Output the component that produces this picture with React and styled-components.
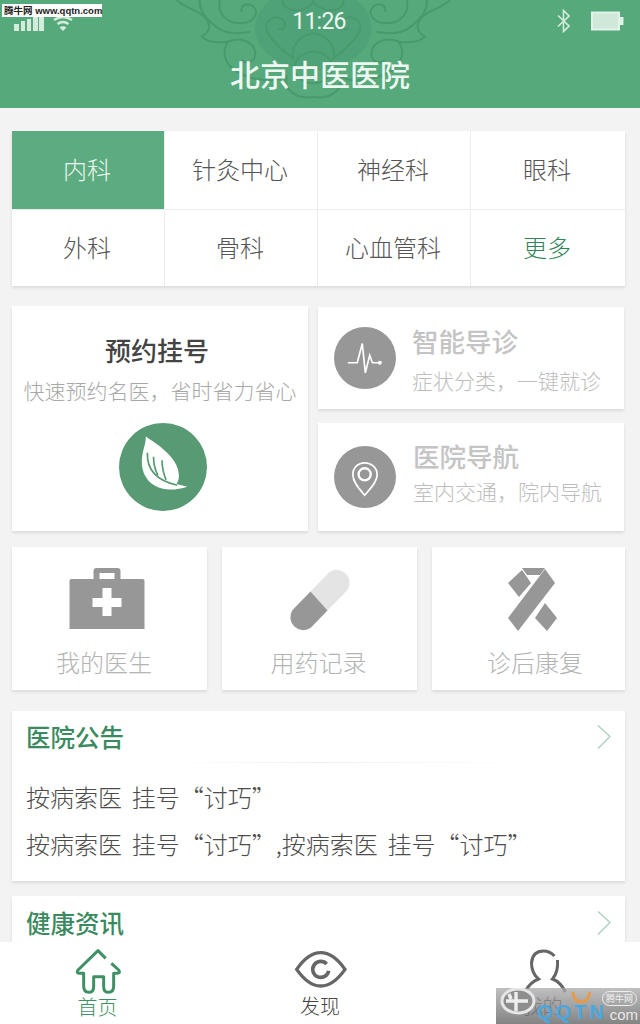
import styled, { createGlobalStyle } from "styled-components";

const GlobalStyle = createGlobalStyle`
  html, body {
    margin: 0;
    padding: 0;
    background: #f3f3f3;
    font-family: "Noto Sans CJK SC", "Noto Sans", sans-serif;
  }
  * { box-sizing: border-box; }
`;

const Page = styled.div`
  position: relative;
  width: 640px;
  height: 1024px;
  display: flex;
  flex-direction: column;
  overflow: hidden;
  background: #f3f3f3;
`;

const Header = styled.header`
  position: relative;
  flex: none;
  height: 108px;
  background: #55a97b;
  color: #eef7f1;
  overflow: hidden;
`;

const Pattern = styled.svg`
  position: absolute;
  left: 150px;
  top: 0;
  width: 330px;
  height: 108px;
`;

const StatusBar = styled.div`
  position: relative;
  height: 42px;
  padding: 0 16px 0 14px;
  display: flex;
  align-items: center;
  justify-content: space-between;
`;

const Clock = styled.span`
  position: absolute;
  left: 240px;
  width: 158px;
  top: 7px;
  text-align: center;
  font-family: Roboto, sans-serif;
  font-size: 23px;
  letter-spacing: -0.8px;
  line-height: 30px;
`;

const StatusGroup = styled.div`
  display: flex;
  align-items: center;
  gap: ${(p) => p.$gap}px;
  margin-top: ${(p) => p.$top || 0}px;
`;

const Title = styled.h1`
  position: relative;
  margin: 0;
  text-align: center;
  font-size: 30px;
  line-height: 40px;
  font-weight: 500;
  padding-top: 11px;
`;

const Main = styled.main`
  flex: 1;
  min-height: 0;
  overflow: hidden;
  padding: 23px 15px 0 12px;
  display: flex;
  flex-direction: column;
  & > * {
    flex: none;
  }
`;

const DeptGrid = styled.div`
  display: grid;
  grid-template-columns: 153px 153px 153px 1fr;
  grid-template-rows: 79px 76px;
  background: #fff;
  box-shadow: 0 2px 3px rgba(0, 0, 0, 0.1);
`;

const Dept = styled.div`
  display: flex;
  align-items: center;
  justify-content: center;
  padding: 0 2px 3px 0;
  font-size: 24px;
  font-weight: 300;
  color: ${(p) => (p.$active ? "#eef7f1" : p.$more ? "#2f8458" : "#555")};
  background: ${(p) => (p.$active ? "#5dab80" : "transparent")};
  border-right: ${(p) => (p.$last ? "none" : "1px solid #ececec")};
  border-bottom: ${(p) => (p.$bottom ? "none" : "1px solid #ececec")};
`;

const Services = styled.div`
  margin-top: 20px;
  display: grid;
  grid-template-columns: 296px 306px;
  column-gap: 10px;
  height: 225px;
`;

const Card = styled.div`
  background: #fff;
  box-shadow: 0 2px 3px rgba(0, 0, 0, 0.1);
`;

const BookCard = styled(Card)`
  display: flex;
  flex-direction: column;
  align-items: center;
  padding-top: 25px;
`;

const BookTitle = styled.div`
  font-size: 26px;
  line-height: 38px;
  color: #444;
  font-weight: 500;
  margin-right: 6px;
`;

const BookSub = styled.div`
  font-size: 21px;
  font-weight: 300;
  line-height: 30px;
  color: #a8a8a8;
  margin-top: 6px;
`;

const LeafBadge = styled.svg`
  display: block;
  width: 88px;
  height: 88px;
  margin-top: 18px;
  margin-left: 5px;
`;

const SideStack = styled.div`
  display: grid;
  grid-template-rows: 102px 108px;
  row-gap: 14px;
  padding-top: 1px;
`;

const SideCard = styled(Card)`
  display: flex;
  align-items: center;
  gap: 16px;
  padding-left: 16px;
`;

const RoundIcon = styled.svg`
  flex: none;
  display: block;
  width: 62px;
  height: 62px;
`;

const SideText = styled.div`
  padding-bottom: ${(p) => p.$lift}px;
  margin-left: ${(p) => p.$nudge}px;
`;

const SideTitle = styled.div`
  font-size: 26.5px;
  line-height: 38px;
  color: #c4c4c4;
  font-weight: 500;
`;

const SideSub = styled.div`
  font-size: 21px;
  font-weight: 300;
  line-height: 30px;
  color: #bdbdbd;
  margin-top: ${(p) => p.$gap}px;
`;

const Tools = styled.div`
  margin-top: 16px;
  display: grid;
  grid-template-columns: 195px 195px 193px;
  column-gap: 15px;
`;

const ToolCard = styled(Card)`
  height: 143px;
  display: flex;
  flex-direction: column;
  align-items: center;
  padding: 19px ${(p) => p.$right || 0}px 0 ${(p) => p.$left || 0}px;
`;

const ToolIcon = styled.svg`
  display: block;
  height: 68px;
  width: 80px;
`;

const ToolLabel = styled.div`
  margin: 11px ${(p) => p.$right || 0}px 0 ${(p) => p.$left || 0}px;
  font-size: 24px;
  font-weight: 300;
  line-height: 34px;
  color: #b4b4b4;
`;

const Notice = styled(Card)`
  margin-top: 21px;
  height: 170px;
  padding: 0 14px;
`;

const SectionHead = styled.div`
  height: 51px;
  display: flex;
  align-items: center;
  justify-content: space-between;
`;

const SectionTitle = styled.h2`
  margin: 0;
  font-size: 24.5px;
  font-weight: 500;
  color: #3b8a5f;
`;

const Fade = styled.div`
  height: 1px;
  background: linear-gradient(90deg, transparent 25%, #efefef 50%, transparent 85%);
`;

const NoticeLines = styled.div`
  padding-top: 16px;
  display: flex;
  flex-direction: column;
  gap: 12px;
`;

const NoticeLine = styled.div`
  font-size: 24px;
  font-weight: 300;
  line-height: 35px;
  word-spacing: 4.5px;
  color: #4c4c4c;
  white-space: nowrap;
`;

const Health = styled(Card)`
  margin-top: 15px;
  padding: 1px 14px 0;
`;

const TabBar = styled.nav`
  flex: none;
  height: 82px;
  background: #fff;
  display: grid;
  grid-template-columns: 195px 1fr 195px;
`;

const Tab = styled.div`
  display: flex;
  flex-direction: column;
  align-items: center;
  padding-top: 7px;
  font-size: 20px;
  font-weight: 300;
  line-height: 28px;
  color: ${(p) => p.$color};
`;

const TabIcon = styled.svg`
  display: block;
  width: 56px;
  height: 46px;
  margin-bottom: ${(p) => p.$pull}px;
`;

const TopMark = styled.div`
  position: absolute;
  left: 2px;
  top: 4px;
  width: 100px;
  height: 13px;
  background: #fff;
  color: #222;
  font-family: "Liberation Sans", "Noto Sans CJK SC", sans-serif;
  font-size: 9.5px;
  font-weight: 700;
  line-height: 13px;
  white-space: nowrap;
  padding-left: 2px;
`;

const CornerMark = styled.div`
  position: absolute;
  right: 0;
  bottom: 0;
  width: 144px;
  height: 36px;
  background: linear-gradient(180deg, rgba(170, 170, 170, 0.75), rgba(110, 110, 110, 0.85));
  overflow: hidden;
`;

const CornerLogo = styled.svg`
  position: absolute;
  left: 2px;
  top: 0;
  width: 94px;
  height: 36px;
`;

const CornerText = styled.span`
  position: absolute;
  left: 41px;
  bottom: 0;
  font-family: "Liberation Sans", sans-serif;
  font-size: 20px;
  letter-spacing: 3px;
  line-height: 24px;
  font-weight: 700;
  color: #4aa8e0;
`;

const CornerCom = styled.span`
  position: absolute;
  right: 2px;
  bottom: 1px;
  font-family: "Liberation Sans", sans-serif;
  font-size: 15px;
  line-height: 16px;
  color: #e8e8e8;
`;

const CornerTag = styled.span`
  position: absolute;
  right: 3px;
  top: 3px;
  width: 35px;
  height: 15px;
  border: 1px solid #eee;
  border-radius: 8px;
  font-size: 9px;
  line-height: 13px;
  text-align: center;
  color: #eee;
`;

const Chevron = () => (
  <svg width="14" height="26" viewBox="0 0 14 26" fill="none">
    <path d="M1 1.5 L13 12.5 L1 24.5" stroke="#a9d1bd" strokeWidth="1.4" />
  </svg>
);

const depts = [
  ["内科", "针灸中心", "神经科", "眼科"],
  ["外科", "骨科", "心血管科", "更多"],
];

// left half of the ornament, mirrored about x=490
const Scrolls = () => (
  <g>
    <path d="M490 290 C440 300 400 270 410 230 C370 250 300 240 260 215 C220 190 215 150 235 125 C200 130 170 125 155 110 C190 90 180 60 150 40 C120 25 95 15 80 0" />
    <path d="M235 125 C270 110 310 125 315 155 C320 185 290 195 275 180" />
    <path d="M210 0 C200 40 230 70 270 70 C310 70 330 40 310 20 C295 5 270 15 275 35" />
    <path d="M490 100 C450 105 420 140 430 175 C395 150 365 125 350 90 C340 60 380 40 400 60 C415 78 395 95 385 85" />
    <path d="M400 0 C395 20 420 35 450 30 C475 25 490 10 490 0" />
    <path d="M490 155 C450 155 420 190 440 225 C455 250 490 250 490 250" />
    <path d="M150 0 C145 30 170 60 205 85 C235 105 270 100 300 95" />
  </g>
);

const App = () => {
  return (
    <Page>
      <GlobalStyle />
      <Header>
        <Pattern viewBox="0 0 990 324" fill="none">
          <ellipse cx="490" cy="85" rx="175" ry="125" fill="#4fa277" />
          <g stroke="#489a6e" strokeWidth="6">
            <Scrolls />
            <g transform="translate(980 0) scale(-1 1)">
              <Scrolls />
            </g>
          </g>
        </Pattern>
        <StatusBar>
          <StatusGroup $gap={9} $top={5}>
            <svg width="30" height="14" viewBox="0 0 30 14">
              <rect x="0" y="7" width="5" height="7" fill="#d5ecdd" />
              <rect x="7" y="4" width="4" height="10" fill="#d5ecdd" />
              <rect x="13" y="2" width="4" height="12" fill="#d5ecdd" />
              <rect x="19" y="0" width="5" height="14" fill="#d5ecdd" />
              <rect x="25" y="0" width="5" height="14" fill="#d5ecdd" />
            </svg>
            <svg width="20" height="14" viewBox="0 0 20 14" fill="none" stroke="#d5ecdd" strokeWidth="2.4">
              <path d="M1 3 Q10 -3 19 3" />
              <path d="M4.5 7 Q10 3 15.5 7" />
              <path d="M10 14 L6.5 10.5 Q10 8 13.5 10.5 Z" fill="#d5ecdd" stroke="none" />
            </svg>
          </StatusGroup>
          <Clock>11:26</Clock>
          <StatusGroup $gap={21}>
            <svg width="13" height="24" viewBox="0 0 13 24" fill="none" stroke="#d5ecdd" strokeWidth="1.6">
              <path d="M1 6.5 L12 17 L6.5 22.5 L6.5 1.5 L12 7 L1 17.5" />
            </svg>
            <svg width="33" height="20" viewBox="0 0 33 20">
              <rect x="1" y="1.5" width="27" height="17" fill="#cfe8d9" stroke="#e2f2e9" strokeWidth="2" />
              <rect x="29" y="6" width="3.5" height="8" fill="#e2f2e9" />
            </svg>
          </StatusGroup>
        </StatusBar>
        <Title>北京中医医院</Title>
      </Header>

      <Main>
        <DeptGrid>
          {depts.map((row, r) =>
            row.map((name, c) => (
              <Dept
                key={name}
                $active={name === "内科"}
                $more={name === "更多"}
                $last={c === 3}
                $bottom={r === 1}
              >
                {name}
              </Dept>
            ))
          )}
        </DeptGrid>

        <Services>
          <BookCard>
            <BookTitle>预约挂号</BookTitle>
            <BookSub>快速预约名医，省时省力省心</BookSub>
            <LeafBadge viewBox="13 10 260 260">
              <circle cx="143" cy="140" r="130" fill="#579a73" />
              <path
                d="M92 50 C130 75 190 115 190 165 C190 175 188 183 183 190 L215 198 C185 208 145 212 118 195 C90 178 75 145 82 105 C85 85 93 70 92 50 Z"
                fill="#fff"
              />
              <g fill="none" stroke="#579a73" strokeWidth="5">
                <path d="M97 98 C95 140 115 178 185 194" />
                <path d="M115 110 C115 130 120 150 128 165" />
                <path d="M140 120 C140 140 145 160 152 178" />
              </g>
            </LeafBadge>
          </BookCard>

          <SideStack>
            <SideCard>
              <RoundIcon viewBox="44 86 184 184">
                <circle cx="136" cy="178" r="92" fill="#979797" />
                <path d="M85 192 H113 L128 135 L137 222 L150 170 L158 192 H180" fill="none" stroke="#fff" strokeWidth="5" />
                <circle cx="180" cy="192" r="6" fill="#fff" />
              </RoundIcon>
              <SideText $lift={0} $nudge={0}>
                <SideTitle>智能导诊</SideTitle>
                <SideSub $gap={5}>症状分类，一键就诊</SideSub>
              </SideText>
            </SideCard>
            <SideCard>
              <RoundIcon viewBox="44 432 184 184">
                <circle cx="136" cy="524" r="92" fill="#979797" />
                <path
                  d="M135 578 C120 560 100 540 100 517 C100 497 115 482 135 482 C155 482 172 497 172 517 C172 540 150 560 135 578 Z"
                  fill="none"
                  stroke="#fff"
                  strokeWidth="5"
                />
                <circle cx="135" cy="516" r="18" fill="none" stroke="#fff" strokeWidth="7" />
              </RoundIcon>
              <SideText $lift={12} $nudge={1}>
                <SideTitle>医院导航</SideTitle>
                <SideSub $gap={1}>室内交通，院内导航</SideSub>
              </SideText>
            </SideCard>
          </SideStack>
        </Services>

        <Tools>
          <ToolCard $right={6}>
            <ToolIcon viewBox="66.5 566 80 68">
              <path d="M93 579 V571 Q93 568 96 568 H117 Q120 568 120 571 V579 H114 V573 H99 V579 Z" fill="#979797" />
              <path d="M69 581 Q69 579 71 579 H142 Q144 579 144 581 V629 H69 Z" fill="#979797" />
              <path d="M102 588 H111 V598 H121 V607 H111 V616 H102 V607 H92 V598 H102 Z" fill="#fff" />
            </ToolIcon>
            <ToolLabel $right={5}>我的医生</ToolLabel>
          </ToolCard>
          <ToolCard>
            <ToolIcon viewBox="279.5 566 80 68">
              <path d="M310 591.5 L329 572 A13 13 0 0 1 347 590 L327 610.5 Z" fill="#e4e4e4" />
              <path d="M310 591.5 L327 610.5 L310 628 A13 13 0 0 1 292 610 Z" fill="#979797" />
            </ToolIcon>
            <ToolLabel $right={2}>用药记录</ToolLabel>
          </ToolCard>
          <ToolCard $left={9}>
            <ToolIcon viewBox="493 566 80 68">
              <path d="M522 568 H545 L540 575 H527 Z" fill="#979797" />
              <path d="M545 569 L555 583 L518 631 L508 618 Z" fill="#979797" />
              <path d="M522 570 L531 583 L519 597 L508 583 Z" fill="#979797" />
              <path d="M545 603 L557 618 L547 631 L535 618 Z" fill="#979797" />
            </ToolIcon>
            <ToolLabel $left={4}>诊后康复</ToolLabel>
          </ToolCard>
        </Tools>

        <Notice>
          <SectionHead>
            <SectionTitle>医院公告</SectionTitle>
            <Chevron />
          </SectionHead>
          <Fade />
          <NoticeLines>
            <NoticeLine>按病索医 挂号“讨巧”</NoticeLine>
            <NoticeLine>按病索医 挂号“讨巧”,按病索医 挂号“讨巧”</NoticeLine>
          </NoticeLines>
        </Notice>

        <Health>
          <SectionHead>
            <SectionTitle>健康资讯</SectionTitle>
            <Chevron />
          </SectionHead>
        </Health>
      </Main>

      <TabBar>
        <Tab $color="#3f9165">
          <TabIcon $pull={-2} viewBox="26 27 168 138" fill="none" stroke="#3f9165" strokeWidth="9" strokeLinejoin="round">
            <path d="M133 55 L110 32 L50 90 Q44 100 55 100 L67 100 V138 Q67 157 82 157 Q97 157 97 140 V110 H127 V140 Q127 157 142 157 Q157 157 157 138 V100 L168 100 Q178 100 172 90 L150 70" />
          </TabIcon>
          首页
        </Tab>
        <Tab $color="#444">
          <TabIcon $pull={-3} viewBox="36 27 168 138" fill="none" stroke="#666" strokeWidth="10">
            <path d="M50 88 Q85 38 122 38 Q160 38 195 88 Q160 138 122 138 Q85 138 50 88 Z" />
            <path d="M140 72 A24 24 0 1 0 146 92" strokeWidth="11" />
          </TabIcon>
          发现
        </Tab>
        <Tab $color="#444">
          <TabIcon $pull={-3} viewBox="514.5 949 56 46" fill="none" stroke="#666" strokeWidth="3">
            <path d="M554 956 Q549 951 543 951 Q532 951 531 963 Q531 973 538 979 Q530 982 525 991" />
            <path d="M557 960 Q558 972 552 979 Q560 982 565 992" />
          </TabIcon>
          我的
        </Tab>
      </TabBar>

      <TopMark>腾牛网 www.qqtn.com</TopMark>
      <CornerMark>
        <CornerLogo viewBox="0 0 94 36" fill="none">
          <ellipse cx="20" cy="13" rx="16" ry="12" fill="#8e8e8e" stroke="#e6e6e6" strokeWidth="3" />
          <path d="M8 13 H30 M18 4 V23 M11 6 L13 11" stroke="#eee" strokeWidth="3.4" />
          <path d="M75 4 Q76 14 83 14 Q90 14 92 4" stroke="#e59a4a" strokeWidth="3" />
        </CornerLogo>
        <CornerText>QQTN</CornerText>
        <CornerCom>com</CornerCom>
        <CornerTag>腾牛网</CornerTag>
      </CornerMark>
    </Page>
  );
};

export default App;
